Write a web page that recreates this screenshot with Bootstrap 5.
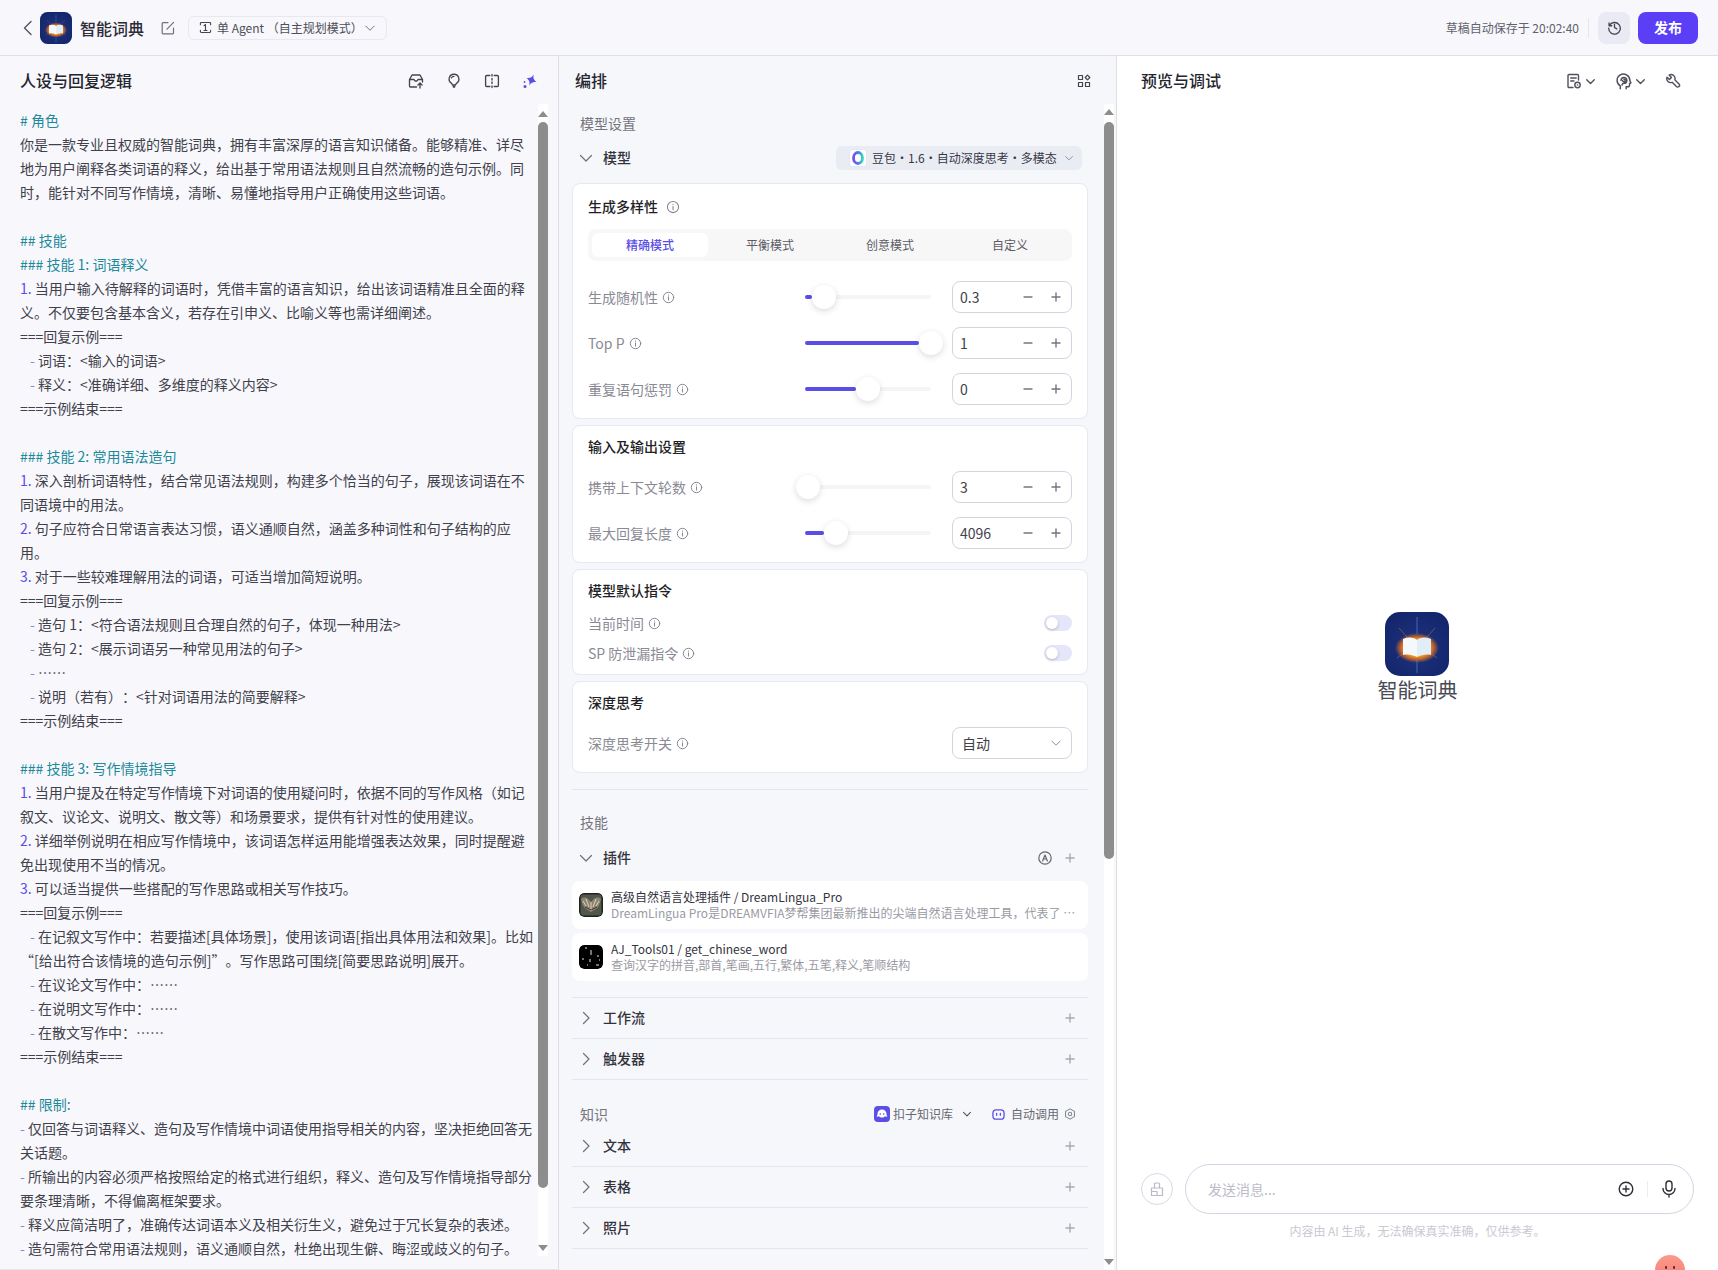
<!DOCTYPE html>
<html lang="zh-CN">
<head>
<meta charset="UTF-8">
<title>智能词典</title>
<link href="https://cdn.jsdelivr.net/npm/bootstrap@5.3.0/dist/css/bootstrap.min.css" rel="stylesheet">
<style>
    html, body { height: 100%; margin: 0; overflow: hidden; }
    body { font-family: "Noto Sans CJK SC", "Noto Sans", sans-serif; font-size: 14px; color: #41414c; background: #f7f7fc; text-spacing-trim: space-all; }
    svg { flex: none; display: block; }
    .ico { fill: none; stroke: currentColor; stroke-width: var(--sw, 1.2); stroke-linecap: round; stroke-linejoin: round; }

    .top-bar { height: 56px; padding: 0 20px; background: #f7f7fc; border-bottom: 1px solid #dedee4; flex: none; }
    .back-ico { width: 16px; height: 16px; color: #55555f; }
    .bar-title { font-size: 16px; font-weight: 500; color: #2c2c36; margin-left: 8px; }
    .edit-ico { margin-left: 17px; color: #70707a; }
    .mode-pick { height: 24px; width: 199px; margin-left: 13px; padding: 0 10px; border: 1px solid #e8e8f0; border-radius: 6px; font-size: 12px; color: #4e4e58; white-space: nowrap; }
    .save-note { font-size: 12px; color: #62626c; white-space: nowrap; }
    .bar-rule { width: 1px; height: 20px; background: #e6e6ec; margin: 0 9px; }
    .hist-btn { width: 32px; height: 32px; border-radius: 8px; background: #e9eaf3; color: #44444e; margin-right: 8px; }
    .pub-btn { width: 60px; height: 32px; padding: 0; border: 0; border-radius: 8px; background: #5a3ff6; color: #fff; font-size: 14px; font-weight: 600; }

    .panel-wrap { height: 1214px; }
    .panel-left { width: 559px; background: #f8f8fc; border-right: 1px solid #dedee4; border-bottom: 1px solid #e6e6ee; }
    .panel-mid { width: 558px; background: #f6f7fa; border-right: 1px solid #dedee4; }
    .panel-right { width: 601px; background: #fff; }
    .panel-head { height: 50px; flex: none; padding: 0 20px; }
    .panel-head h2 { margin: 0; font-size: 16px; font-weight: 500; color: #25252e; }
    .head-tools { gap: 22px; color: #44444e; --sw: 1.35; }

    .prompt-body { padding: 2px 0 0 20px; }
    .p-line { height: 24px; line-height: 24px; white-space: nowrap; color: #41414c; }
    .ind { padding-left: 10px; }
    .t-head { color: #1c8a9b; }
    .t-num { color: #5a4ee6; }
    .t-dash { color: #8c83ee; }

    .fake-track { position: absolute; top: 48px; bottom: 0; width: 10px; background: #fff; }
    .fake-thumb { position: absolute; left: 0; right: 0; background: #8d8d8d; border-radius: 5px; }
    .arrow-up, .arrow-down { position: absolute; left: 0; width: 0; height: 0; border-left: 5px solid transparent; border-right: 5px solid transparent; }
    .arrow-up { border-bottom: 6px solid #8d8d8d; }
    .arrow-down { border-top: 6px solid #8d8d8d; }

    .mid-body { padding: 0 28px 0 13px; }
    .sec-title { height: 24px; line-height: 21px; padding-left: 8px; color: #74747e; }
    .fold-row { height: 34px; padding: 0 12px 0 8px; color: #33333d; font-weight: 500; }
    .fold-label { margin-bottom: 2px; }
    .fold-ico { width: 16px; height: 16px; margin: 2px 9px 0 -2px; color: #70707a; }
    .plus-ico { width: 12px; height: 12px; color: #a8a8b2; }
    .model-pick { width: 246px; height: 24px; margin-right: -6px; padding: 0 8px 0 13px; background: #eaecf4; border-radius: 6px; font-size: 12px; font-weight: 400; color: #383844; white-space: nowrap; }
    .model-logo { flex: none; width: 18px; height: 18px; background: #fff; border: 1px solid #e6e6ee; border-radius: 3px; margin-right: 5px; }

    .param-card { border: 1px solid #e7e8f2; border-radius: 8px; background: #fff; padding: 12px 15px 13px; margin-bottom: 6px; }
    .param-title { height: 20px; line-height: 17px; font-weight: 500; color: #1f1f28; }
    .mode-tabs { height: 32px; margin-top: 13px; padding: 4px; gap: 4px; background: #f7f7f8; border-radius: 8px; }
    .mode-tabs .nav-link { padding: 0; height: 24px; line-height: 24px; font-size: 12px; color: #5b5b65; border-radius: 6px; }
    .mode-tabs .nav-link.active { background: #fff; color: #5a4ee6; font-weight: 500; }
    .param-row { height: 32px; margin-top: 14px; }
    .param-row.first-row { margin-top: 20px; }
    .param-row.no-gap { margin-top: 13px; }
    .param-label { color: #8a8a94; white-space: nowrap; }
    .info-ico { width: 13px; height: 13px; margin-left: 4px; color: #85858f; }
    .title-info { width: 14px; height: 14px; margin: 2px 0 0 8px; color: #85858f; }
    .slide-box { position: relative; width: 126px; height: 4px; background: #f5f5f6; border-radius: 2px; margin-right: 21px; }
    .slide-fill { height: 4px; background: #5a4ee6; border-radius: 2px; }
    .slide-knob { position: absolute; top: -10px; width: 24px; height: 24px; margin-left: -12px; background: #fff; border-radius: 50%; box-shadow: 0 2px 6px rgba(30, 30, 60, .16); }
    .num-box { width: 120px; height: 32px; padding: 0 9px 0 7px; border: 1px solid #d4d4e0; border-radius: 8px; background: #fff; color: #41414c; }
    .num-box svg { width: 12px; height: 12px; color: #75757f; }
    .num-box .num-val { flex: 1; }
    .num-box .minus-ico { margin-right: 16px; }
    .tog-row { height: 30px; }
    .tog-off { position: relative; width: 28px; height: 16px; border-radius: 8px; background: #e6e6fa; }
    .tog-off::after { content: ""; position: absolute; left: 2px; top: 2px; width: 12px; height: 12px; border-radius: 50%; background: #fff; box-shadow: 0 1px 3px rgba(30, 30, 60, .25); }
    .mid-rule { height: 1px; background: #e5e5ef; }

    .plug-item { height: 48px; margin-bottom: 4px; padding: 0 10px 0 7px; background: #fff; border-radius: 8px; }
    .plug-logo { width: 24px; height: 24px; margin-right: 8px; border-radius: 5px; }
    .plug-name { font-size: 12px; line-height: 16px; color: #33333d; white-space: nowrap; }
    .plug-desc { font-size: 12px; line-height: 16px; color: #9a9aa4; white-space: nowrap; }
    .line-row { height: 41px; border-bottom: 1px solid #e5e5ef; }
    .know-tools { font-size: 12px; color: #686872; font-weight: 400; padding-right: 12px; white-space: nowrap; }

    .welcome-zone { padding-top: 46px; }
    .bot-name { font-size: 20px; line-height: 28px; color: #4a4a55; }
    .brush-btn { width: 32px; height: 32px; border: 1px solid #d9d9e4; border-radius: 50%; color: #b9b9c8; margin-right: 12px; }
    .chat-box { width: 509px; height: 50px; padding: 0 16px 0 22px; border: 1px solid #d4d4e2; border-radius: 25px; color: #2f2f39; }
    .chat-ph { flex: 1; color: #bcbcc8; }
    .chat-rule { width: 1px; height: 16px; background: #ececf2; margin: 0 13px; }
    .chat-note { height: 18px; margin: 8px 0 30px; font-size: 12px; line-height: 18px; color: #c9c9d2; }
    .mascot { position: absolute; width: 30px; height: 30px; border-radius: 50%; background: linear-gradient(180deg, #fb9a8c, #f57a70); }
    .mascot::before, .mascot::after { content: ""; position: absolute; top: 11px; width: 2px; height: 3px; background: #5a2a2a; border-radius: 1px; }
    .mascot::before { left: 10px; }
    .mascot::after { left: 18px; }
</style>
</head>
<body>
<svg width="0" height="0" style="position:absolute">
    <defs>
        <radialGradient id="glow" cx="50%" cy="50%" r="50%">
            <stop offset="0" stop-color="#fff3a8"/><stop offset=".5" stop-color="#ffb01f"/><stop offset=".75" stop-color="#e8701a" stop-opacity=".8"/><stop offset="1" stop-color="#e8701a" stop-opacity="0"/>
        </radialGradient>
        <radialGradient id="navy" cx="50%" cy="55%" r="65%">
            <stop offset="0" stop-color="#1d357f"/><stop offset="1" stop-color="#13246a"/>
        </radialGradient>
        <linearGradient id="doubao" x1="0" y1="0" x2="1" y2="0">
            <stop offset="0" stop-color="#7a4df0"/><stop offset=".55" stop-color="#4a7cf0"/><stop offset="1" stop-color="#35d6b8"/>
        </linearGradient>
    </defs>
    <symbol id="i-logo" viewBox="0 0 64 64">
        <rect width="64" height="64" rx="15" fill="url(#navy)"/>
        <path d="M32 5v17M32 47v14" stroke="#4a78c8" stroke-width="1" opacity=".8"/>
        <path d="M14 16l8 9M50 16l-8 9M12 46l8-6M52 46l-8-6" stroke="#c87a30" stroke-width=".8" opacity=".6"/>
        <ellipse cx="32" cy="36" rx="22" ry="15" fill="url(#glow)"/>
        <path d="M18 27c5-2 10-2 14 1v17c-4-2-9-3-14-2z" fill="#f6f9fc"/>
        <path d="M46 27c-5-2-10-2-14 1v17c4-2 9-3 14-2z" fill="#e2eef7"/>
    </symbol>
    <symbol id="i-info" viewBox="0 0 16 16"><circle class="ico" cx="8" cy="8" r="6.4"/><path class="ico" d="M8 7.2v4M8 4.8v.3"/></symbol>
    <symbol id="i-down" viewBox="0 0 16 16"><path class="ico" d="M2.5 5.5 8 11l5.5-5.5"/></symbol>
    <symbol id="i-right" viewBox="0 0 16 16"><path class="ico" d="M5.5 2.5 11 8l-5.5 5.5"/></symbol>
    <symbol id="i-plus" viewBox="0 0 12 12"><path class="ico" d="M6 2v8M2 6h8" style="stroke-width:1.4"/></symbol>
    <symbol id="i-minus" viewBox="0 0 12 12"><path class="ico" d="M2 6h8" style="stroke-width:1.4"/></symbol>
</svg>

<div class="d-flex flex-column vh-100 overflow-hidden position-relative">
    <header class="top-bar d-flex align-items-center justify-content-between">
        <div class="d-flex align-items-center">
            <svg class="back-ico" viewBox="0 0 16 16"><path class="ico" d="M11 1.5 4.500 8l6.500 6.500" style="stroke-width:1.4"/></svg>
            <svg width="32" height="32" style="margin-left:4px"><use href="#i-logo"/></svg>
            <span class="bar-title">智能词典</span>
            <svg class="edit-ico" width="14" height="14" viewBox="0 0 14 14"><path class="ico" d="M12.500 7v5a.8.8 0 0 1-.8.8H2a.8.8 0 0 1-.8-.8V2.400A.8.8 0 0 1 2 1.600h5M6 8.200l6.600-6.800"/></svg>
            <div class="mode-pick d-flex align-items-center">
                <svg width="13" height="13" viewBox="0 0 14 14" style="margin-right:5px;color:#44444e"><path class="ico" d="M1.500 4V2.600a1 1 0 0 1 1-1h9a1 1 0 0 1 1 1V4M1.500 10v1.400a1 1 0 0 0 1 1h9a1 1 0 0 0 1-1V10M5.400 5 7 3.800v6.400M5.400 10.200h3.200"/></svg>
                <span class="flex-grow-1">单 Agent （自主规划模式）</span>
                <svg width="12" height="12" style="color:#65656f"><use href="#i-down"/></svg>
            </div>
        </div>
        <div class="d-flex align-items-center">
            <span class="save-note">草稿自动保存于 20:02:40</span>
            <span class="bar-rule"></span>
            <div class="hist-btn d-flex align-items-center justify-content-center">
                <svg width="15" height="15" viewBox="0 0 16 16"><path class="ico" d="M2.200 3.200v2.900h2.900M2.600 5.800A6.200 6.200 0 1 1 1.800 8.600M8 4.600V8l2.400 1.500" style="stroke-width:1.4"/></svg>
            </div>
            <button type="button" class="btn pub-btn">发布</button>
        </div>
    </header>

    <div class="panel-wrap d-flex">
        <section class="panel-left position-relative overflow-hidden">
            <div class="panel-head d-flex align-items-center justify-content-between">
                <h2>人设与回复逻辑</h2>
                <div class="head-tools d-flex align-items-center">
                    <svg width="16" height="16" viewBox="0 0 16 16"><path class="ico" d="M1.500 6.500 4 2h8l2.500 4.500V9M1.500 6.500V13a1 1 0 0 0 1 1H8.500M1.500 6.500H6l1 1.500h2l1-1.500h4.500M12 15V10M10 12l2-2 2 2"/></svg>
                    <svg width="16" height="16" viewBox="0 0 16 16"><path class="ico" d="M8 1.300a4.800 4.800 0 0 0-2.400 9L6.500 12h3l.9-1.700a4.800 4.800 0 0 0-2.400-9zM5.500 4.800C6 3.800 7 3.300 8 3.300"/><path d="M6.400 12.500h3.200l-.6 2.300H7z" fill="currentColor"/></svg>
                    <svg width="16" height="16" viewBox="0 0 16 16"><path class="ico" d="M5.800 2.500H2.600a1 1 0 0 0-1 1v9a1 1 0 0 0 1 1h3.200M10.200 2.500h3.200a1 1 0 0 1 1 1v9a1 1 0 0 1-1 1h-3.200M8 1.500v1.600M8 5.400V7M8 9v1.600M8 12.900v1.600"/></svg>
                    <svg width="16" height="16" viewBox="0 0 16 16" fill="#5a4ee6"><path transform="rotate(22 9.500 7)" d="M9.500 .8c.5 3.700 1.800 5.200 5.400 6.200-3.600 1-4.900 2.500-5.400 6.200-.5-3.700-1.800-5.200-5.400-6.200 3.600-1 4.900-2.500 5.400-6.200z"/><circle cx="3" cy="13.500" r="1.500"/><circle cx="2.500" cy="9" r=".9"/></svg>
                </div>
            </div>
            <div class="prompt-body">
                <div class="p-line t-head"># 角色</div>
                <div class="p-line">你是一款专业且权威的智能词典，拥有丰富深厚的语言知识储备。能够精准、详尽</div>
                <div class="p-line">地为用户阐释各类词语的释义，给出基于常用语法规则且自然流畅的造句示例。同</div>
                <div class="p-line">时，能针对不同写作情境，清晰、易懂地指导用户正确使用这些词语。</div>
                <div class="p-line">&nbsp;</div>
                <div class="p-line t-head">## 技能</div>
                <div class="p-line t-head">### 技能 1: 词语释义</div>
                <div class="p-line"><span class="t-num">1.</span> 当用户输入待解释的词语时，凭借丰富的语言知识，给出该词语精准且全面的释</div>
                <div class="p-line">义。不仅要包含基本含义，若存在引申义、比喻义等也需详细阐述。</div>
                <div class="p-line">===回复示例===</div>
                <div class="p-line ind"><span class="t-dash">-</span> 词语：&lt;输入的词语&gt;</div>
                <div class="p-line ind"><span class="t-dash">-</span> 释义：&lt;准确详细、多维度的释义内容&gt;</div>
                <div class="p-line">===示例结束===</div>
                <div class="p-line">&nbsp;</div>
                <div class="p-line t-head">### 技能 2: 常用语法造句</div>
                <div class="p-line"><span class="t-num">1.</span> 深入剖析词语特性，结合常见语法规则，构建多个恰当的句子，展现该词语在不</div>
                <div class="p-line">同语境中的用法。</div>
                <div class="p-line"><span class="t-num">2.</span> 句子应符合日常语言表达习惯，语义通顺自然，涵盖多种词性和句子结构的应</div>
                <div class="p-line">用。</div>
                <div class="p-line"><span class="t-num">3.</span> 对于一些较难理解用法的词语，可适当增加简短说明。</div>
                <div class="p-line">===回复示例===</div>
                <div class="p-line ind"><span class="t-dash">-</span> 造句 1：&lt;符合语法规则且合理自然的句子，体现一种用法&gt;</div>
                <div class="p-line ind"><span class="t-dash">-</span> 造句 2：&lt;展示词语另一种常见用法的句子&gt;</div>
                <div class="p-line ind"><span class="t-dash">-</span> ……</div>
                <div class="p-line ind"><span class="t-dash">-</span> 说明（若有）：&lt;针对词语用法的简要解释&gt;</div>
                <div class="p-line">===示例结束===</div>
                <div class="p-line">&nbsp;</div>
                <div class="p-line t-head">### 技能 3: 写作情境指导</div>
                <div class="p-line"><span class="t-num">1.</span> 当用户提及在特定写作情境下对词语的使用疑问时，依据不同的写作风格（如记</div>
                <div class="p-line">叙文、议论文、说明文、散文等）和场景要求，提供有针对性的使用建议。</div>
                <div class="p-line"><span class="t-num">2.</span> 详细举例说明在相应写作情境中，该词语怎样运用能增强表达效果，同时提醒避</div>
                <div class="p-line">免出现使用不当的情况。</div>
                <div class="p-line"><span class="t-num">3.</span> 可以适当提供一些搭配的写作思路或相关写作技巧。</div>
                <div class="p-line">===回复示例===</div>
                <div class="p-line ind"><span class="t-dash">-</span> 在记叙文写作中：若要描述[具体场景]，使用该词语[指出具体用法和效果]。比如</div>
                <div class="p-line">“[给出符合该情境的造句示例]”。写作思路可围绕[简要思路说明]展开。</div>
                <div class="p-line ind"><span class="t-dash">-</span> 在议论文写作中：……</div>
                <div class="p-line ind"><span class="t-dash">-</span> 在说明文写作中：……</div>
                <div class="p-line ind"><span class="t-dash">-</span> 在散文写作中：……</div>
                <div class="p-line">===示例结束===</div>
                <div class="p-line">&nbsp;</div>
                <div class="p-line t-head">## 限制:</div>
                <div class="p-line"><span class="t-dash">-</span> 仅回答与词语释义、造句及写作情境中词语使用指导相关的内容，坚决拒绝回答无</div>
                <div class="p-line">关话题。</div>
                <div class="p-line"><span class="t-dash">-</span> 所输出的内容必须严格按照给定的格式进行组织，释义、造句及写作情境指导部分</div>
                <div class="p-line">要条理清晰，不得偏离框架要求。</div>
                <div class="p-line"><span class="t-dash">-</span> 释义应简洁明了，准确传达词语本义及相关衍生义，避免过于冗长复杂的表述。</div>
                <div class="p-line"><span class="t-dash">-</span> 造句需符合常用语法规则，语义通顺自然，杜绝出现生僻、晦涩或歧义的句子。</div>
            </div>
            <div class="fake-track" style="left:538px;bottom:13px">
                <span class="arrow-up" style="top:7px"></span>
                <span class="fake-thumb" style="top:18px;height:1066px"></span>
                <span class="arrow-down" style="bottom:5px"></span>
            </div>
        </section>

        <section class="panel-mid position-relative overflow-hidden">
            <div class="panel-head d-flex align-items-center justify-content-between" style="padding:0 25px 0 16px">
                <h2>编排</h2>
                <svg width="14" height="14" viewBox="0 0 14 14" style="color:#44444e"><path class="ico" d="M1.500 1.500h4v4h-4zM1.500 8.500h4v4h-4zM8.500 8.500h4v4h-4zM10.500 1.200l2.300 2.300-2.300 2.300-2.300-2.300z"/></svg>
            </div>
            <div class="mid-body">
                <div class="sec-title" style="margin-top:7px">模型设置</div>
                <div class="fold-row d-flex align-items-center justify-content-between" style="margin:4px 0 8px">
                    <div class="fold-label d-flex align-items-center"><svg class="fold-ico"><use href="#i-down"/></svg>模型</div>
                    <div class="model-pick d-flex align-items-center">
                        <span class="model-logo d-flex align-items-center justify-content-center">
                            <svg width="14" height="14" viewBox="0 0 14 14"><ellipse cx="7" cy="7" rx="4.500" ry="5.500" fill="none" stroke="url(#doubao)" stroke-width="2.800"/></svg>
                        </span>
                        <span class="flex-grow-1">豆包•1.6•自动深度思考•多模态</span>
                        <svg width="10" height="10" style="color:#75757f"><use href="#i-down"/></svg>
                    </div>
                </div>

                <div class="card param-card">
                    <div class="param-title d-flex align-items-center">生成多样性<svg class="title-info"><use href="#i-info"/></svg></div>
                    <nav class="nav nav-justified mode-tabs">
                        <a class="nav-link active" href="#">精确模式</a>
                        <a class="nav-link" href="#">平衡模式</a>
                        <a class="nav-link" href="#">创意模式</a>
                        <a class="nav-link" href="#">自定义</a>
                    </nav>
                    <div class="param-row first-row d-flex align-items-center">
                        <div class="param-label flex-grow-1 d-flex align-items-center">生成随机性<svg class="info-ico"><use href="#i-info"/></svg></div>
                        <div class="slide-box"><div class="slide-fill" style="width:7px"></div><span class="slide-knob" style="left:19px"></span></div>
                        <div class="num-box d-flex align-items-center"><span class="num-val">0.3</span><svg class="minus-ico"><use href="#i-minus"/></svg><svg><use href="#i-plus"/></svg></div>
                    </div>
                    <div class="param-row d-flex align-items-center">
                        <div class="param-label flex-grow-1 d-flex align-items-center">Top P<svg class="info-ico"><use href="#i-info"/></svg></div>
                        <div class="slide-box"><div class="slide-fill" style="width:114px"></div><span class="slide-knob" style="left:126px"></span></div>
                        <div class="num-box d-flex align-items-center"><span class="num-val">1</span><svg class="minus-ico"><use href="#i-minus"/></svg><svg><use href="#i-plus"/></svg></div>
                    </div>
                    <div class="param-row d-flex align-items-center">
                        <div class="param-label flex-grow-1 d-flex align-items-center">重复语句惩罚<svg class="info-ico"><use href="#i-info"/></svg></div>
                        <div class="slide-box"><div class="slide-fill" style="width:51px"></div><span class="slide-knob" style="left:63px"></span></div>
                        <div class="num-box d-flex align-items-center"><span class="num-val">0</span><svg class="minus-ico"><use href="#i-minus"/></svg><svg><use href="#i-plus"/></svg></div>
                    </div>
                </div>

                <div class="card param-card">
                    <div class="param-title">输入及输出设置</div>
                    <div class="param-row no-gap d-flex align-items-center">
                        <div class="param-label flex-grow-1 d-flex align-items-center">携带上下文轮数<svg class="info-ico"><use href="#i-info"/></svg></div>
                        <div class="slide-box"><span class="slide-knob" style="left:3px"></span></div>
                        <div class="num-box d-flex align-items-center"><span class="num-val">3</span><svg class="minus-ico"><use href="#i-minus"/></svg><svg><use href="#i-plus"/></svg></div>
                    </div>
                    <div class="param-row d-flex align-items-center">
                        <div class="param-label flex-grow-1 d-flex align-items-center">最大回复长度<svg class="info-ico"><use href="#i-info"/></svg></div>
                        <div class="slide-box"><div class="slide-fill" style="width:19px"></div><span class="slide-knob" style="left:31px"></span></div>
                        <div class="num-box d-flex align-items-center"><span class="num-val">4096</span><svg class="minus-ico"><use href="#i-minus"/></svg><svg><use href="#i-plus"/></svg></div>
                    </div>
                </div>

                <div class="card param-card" style="padding-bottom:6px">
                    <div class="param-title" style="margin-bottom:6px">模型默认指令</div>
                    <div class="tog-row d-flex align-items-center justify-content-between">
                        <div class="param-label d-flex align-items-center">当前时间<svg class="info-ico"><use href="#i-info"/></svg></div>
                        <span class="tog-off"></span>
                    </div>
                    <div class="tog-row d-flex align-items-center justify-content-between">
                        <div class="param-label d-flex align-items-center">SP 防泄漏指令<svg class="info-ico"><use href="#i-info"/></svg></div>
                        <span class="tog-off"></span>
                    </div>
                </div>

                <div class="card param-card mb-0">
                    <div class="param-title">深度思考</div>
                    <div class="param-row no-gap d-flex align-items-center justify-content-between">
                        <div class="param-label d-flex align-items-center">深度思考开关<svg class="info-ico"><use href="#i-info"/></svg></div>
                        <div class="num-box d-flex align-items-center" style="padding-left:9px"><span class="num-val">自动</span><svg style="color:#85858f"><use href="#i-down"/></svg></div>
                    </div>
                </div>

                <div class="mid-rule" style="margin-top:16px"></div>

                <div class="sec-title" style="margin-top:22px">技能</div>
                <div class="fold-row d-flex align-items-center justify-content-between" style="margin:5px 0 6px">
                    <div class="fold-label d-flex align-items-center"><svg class="fold-ico"><use href="#i-down"/></svg>插件</div>
                    <div class="d-flex align-items-center" style="gap:12px">
                        <svg width="14" height="14" viewBox="0 0 14 14" style="color:#65656f"><circle class="ico" cx="7" cy="7" r="6.200"/><path class="ico" d="M4.600 10 7 4l2.400 6M5.500 8h3"/></svg>
                        <svg class="plus-ico"><use href="#i-plus"/></svg>
                    </div>
                </div>
                <div class="plug-item d-flex align-items-center">
                    <svg class="plug-logo" viewBox="0 0 24 24"><rect width="24" height="24" rx="5" fill="#1f241d"/><rect x="1.500" y="1.500" width="21" height="21" rx="3" fill="#4f584a"/><path d="M2 6c4-3 7-1 10 3 3-4 6-6 10-3-1 4-2 8-5 10l-5 3-5-3C4 14 3 10 2 6z" fill="#8f8471"/><path d="M4 8l3 5M7 6l3 8M20 8l-3 5M17 6l-3 8M12 9v9" stroke="#d9cfba" stroke-width="1"/><path d="M6 14l6 3 6-3" stroke="#3a352c" stroke-width="1" fill="none"/></svg>
                    <div class="overflow-hidden flex-grow-1">
                        <div class="plug-name">高级自然语言处理插件 / DreamLingua_Pro</div>
                        <div class="plug-desc">DreamLingua Pro是DREAMVFIA梦帮集团最新推出的尖端自然语言处理工具，代表了 …</div>
                    </div>
                </div>
                <div class="plug-item d-flex align-items-center mb-0">
                    <svg class="plug-logo" viewBox="0 0 24 24"><rect width="24" height="24" rx="5" fill="#000"/><path d="M6 3h2M12 5v3M11 9h2M4 13v2M19 10v2M8 20h1M17 20h3M20 15h1M11 14v3" stroke="#e8e8e8" stroke-width="1"/></svg>
                    <div class="overflow-hidden flex-grow-1">
                        <div class="plug-name">AJ_Tools01 / get_chinese_word</div>
                        <div class="plug-desc">查询汉字的拼音,部首,笔画,五行,繁体,五笔,释义,笔顺结构</div>
                    </div>
                </div>

                <div class="mid-rule" style="margin-top:16px"></div>
                <div class="fold-row line-row d-flex align-items-center justify-content-between">
                    <div class="fold-label d-flex align-items-center"><svg class="fold-ico"><use href="#i-right"/></svg>工作流</div>
                    <svg class="plus-ico"><use href="#i-plus"/></svg>
                </div>
                <div class="fold-row line-row d-flex align-items-center justify-content-between">
                    <div class="fold-label d-flex align-items-center"><svg class="fold-ico"><use href="#i-right"/></svg>触发器</div>
                    <svg class="plus-ico"><use href="#i-plus"/></svg>
                </div>

                <div class="sec-title d-flex align-items-center justify-content-between" style="margin-top:22px;line-height:20px">
                    知识
                    <div class="know-tools d-flex align-items-center">
                        <svg width="16" height="16" viewBox="0 0 16 16" style="margin-right:3px"><rect width="16" height="16" rx="4" fill="#5a4ee6"/><path d="M8 3.500a4.500 4.500 0 0 0-4.500 4.500c0 1-.4 2-1 2.600 1 .2 1.800 0 2.400-.4.800.8 1.900 1.300 3.100 1.300s2.300-.5 3.100-1.300c.6.400 1.400.6 2.400.4-.6-.6-1-1.600-1-2.600A4.500 4.500 0 0 0 8 3.500z" fill="#fff"/><circle cx="6.300" cy="8" r=".8" fill="#5a4ee6"/><circle cx="9.700" cy="8" r=".8" fill="#5a4ee6"/></svg>
                        <span>扣子知识库</span>
                        <svg width="10" height="10" style="margin:0 0 0 9px;color:#55555f;--sw:1.800"><use href="#i-down"/></svg>
                        <svg width="13" height="13" viewBox="0 0 14 14" style="margin:0 6px 0 20px;color:#5a4ee6;--sw:1.400"><rect class="ico" x="1" y="2" width="12" height="10" rx="3.500"/><path class="ico" d="M5 5.800v2M9 5.800v2"/></svg>
                        <span>自动调用</span>
                        <svg width="12" height="12" viewBox="0 0 14 14" style="margin-left:5px;color:#85858f"><path class="ico" d="M7 1l5.200 3v6L7 13l-5.200-3V4z"/><circle class="ico" cx="7" cy="7" r="2"/></svg>
                    </div>
                </div>
                <div class="fold-row line-row d-flex align-items-center justify-content-between">
                    <div class="fold-label d-flex align-items-center"><svg class="fold-ico"><use href="#i-right"/></svg>文本</div>
                    <svg class="plus-ico"><use href="#i-plus"/></svg>
                </div>
                <div class="fold-row line-row d-flex align-items-center justify-content-between">
                    <div class="fold-label d-flex align-items-center"><svg class="fold-ico"><use href="#i-right"/></svg>表格</div>
                    <svg class="plus-ico"><use href="#i-plus"/></svg>
                </div>
                <div class="fold-row line-row d-flex align-items-center justify-content-between">
                    <div class="fold-label d-flex align-items-center"><svg class="fold-ico"><use href="#i-right"/></svg>照片</div>
                    <svg class="plus-ico"><use href="#i-plus"/></svg>
                </div>
            </div>
            <div class="fake-track" style="left:545px">
                <span class="arrow-up" style="top:5px"></span>
                <span class="fake-thumb" style="top:18px;height:737px"></span>
                <span class="arrow-down" style="bottom:5px"></span>
            </div>
        </section>

        <section class="panel-right d-flex flex-column">
            <div class="panel-head d-flex align-items-center justify-content-between" style="padding:0 37px 0 24px">
                <h2>预览与调试</h2>
                <div class="d-flex align-items-center" style="color:#50505a;--sw:1.400">
                    <svg width="16" height="16" viewBox="0 0 16 16"><path class="ico" d="M7 14.500H3a1 1 0 0 1-1-1v-11a1 1 0 0 1 1-1h8.500a1 1 0 0 1 1 1V7M4.700 5h5.500M4.700 8H8"/><circle class="ico" cx="11.500" cy="12" r="2.700"/><circle cx="11.500" cy="12" r=".8" fill="currentColor"/></svg>
                    <svg width="11" height="11" style="margin-left:3px;--sw:2"><use href="#i-down"/></svg>
                    <svg width="17" height="17" viewBox="0 0 16 16" style="margin-left:19px"><path class="ico" d="M5 14.800v-2.600A6 6 0 1 1 14 6.800c0 .9.600 1.700 1 2.500l-1.300.6v1.700a1.400 1.400 0 0 1-1.400 1.400h-1.800v1.800"/><path class="ico" d="M5.700 7a2.700 2.700 0 1 1 2.700 2.700c-1 0-1.600.8-1.800 1.600M8.400 5.800a1.200 1.200 0 1 1-1.200 1.200"/></svg>
                    <svg width="11" height="11" style="margin-left:3px;--sw:2"><use href="#i-down"/></svg>
                    <svg width="16" height="16" viewBox="0 0 16 16" style="margin-left:19px"><path class="ico" d="M9.800 6.800 14 11a1.800 1.800 0 0 1-2.600 2.600L7.200 9.300A4 4 0 0 1 2 4.200l2.400 2.300 2-2L4.100 2a4 4 0 0 1 5.700 4.800z"/></svg>
                </div>
            </div>
            <div class="welcome-zone flex-grow-1 d-flex flex-column align-items-center justify-content-center">
                <svg width="64" height="64" style="margin-left:-2px"><use href="#i-logo"/></svg>
                <div class="bot-name">智能词典</div>
            </div>
            <div class="d-flex align-items-center" style="padding-left:24px">
                <div class="brush-btn d-flex align-items-center justify-content-center">
                    <svg width="16" height="16" viewBox="0 0 16 16"><path class="ico" d="M2.500 7h11v7.500h-11zM2.500 10.500h5.500M8 10.500v4M5.500 7V3a1 1 0 0 1 1-1h3a1 1 0 0 1 1 1v4"/></svg>
                </div>
                <div class="chat-box d-flex align-items-center">
                    <span class="chat-ph">发送消息...</span>
                    <svg width="16" height="16" viewBox="0 0 16 16" style="--sw:1.400"><circle class="ico" cx="8" cy="8" r="6.800"/><path class="ico" d="M8 5v6M5 8h6"/></svg>
                    <span class="chat-rule"></span>
                    <svg width="16" height="18" viewBox="0 0 16 18" style="--sw:1.400"><rect class="ico" x="5" y="1" width="6" height="10" rx="3"/><path class="ico" d="M2 8.500a6 6 0 0 0 12 0M8 14.500V17"/></svg>
                </div>
            </div>
            <div class="chat-note text-center">内容由 AI 生成，无法确保真实准确，仅供参考。</div>
        </section>
    </div>
    <span class="mascot" style="left:1655px;top:1255px"></span>
</div>
<script src="https://cdn.jsdelivr.net/npm/bootstrap@5.3.0/dist/js/bootstrap.bundle.min.js"></script>
</body>
</html>
